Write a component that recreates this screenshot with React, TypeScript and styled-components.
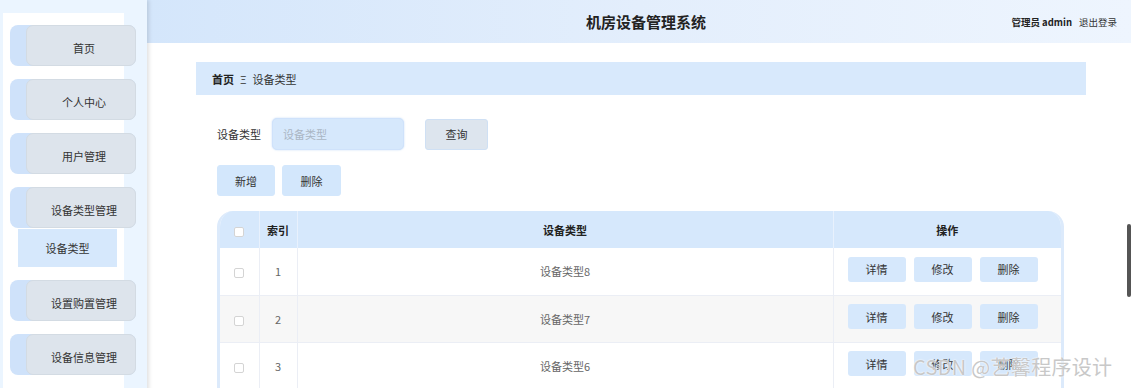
import React from 'react';
import styled, { createGlobalStyle } from 'styled-components';

const GlobalStyle = createGlobalStyle`
  html, body {
    margin: 0;
    padding: 0;
    overflow: hidden;
    background: #fff;
    font-family: "Noto Sans CJK SC", "Noto Sans", "Liberation Sans", sans-serif;
    color: #333;
  }
  * { box-sizing: border-box; }
`;

const Layout = styled.div`
  display: flex;
  min-height: 100vh;
  position: relative;
`;

const Sidebar = styled.aside`
  width: 147px;
  flex-shrink: 0;
  background: #ebf5ff;
  padding: 13px 0 0 3px;
  box-shadow: 2px 0 4px rgba(0, 0, 0, 0.12);
  position: relative;
  z-index: 2;
  display: flex;
`;

const Panel = styled.div`
  width: 121px;
  background: #fff;
  padding: 12px 0 0 7px;
  display: flex;
  flex-direction: column;
`;

const MenuItem = styled.div`
  width: 126px;
  height: 41px;
  padding-left: 16px;
  background: #cfe2fa;
  border-radius: 8px;
  margin-bottom: 13px;
  flex-shrink: 0;
`;

const MenuButton = styled.div`
  height: 100%;
  background: #dde4ec;
  border: 1px solid #d3dbe3;
  border-radius: 7px;
  display: flex;
  align-items: center;
  justify-content: center;
  padding: 5px 0 0 6px;
  font-size: 11px;
  color: #333;
`;

const SubItem = styled.div`
  width: 99px;
  height: 38px;
  margin: -12px 0 13px 8px;
  background: #d6e8fc;
  display: flex;
  align-items: center;
  justify-content: center;
  font-size: 11px;
  color: #333;
  flex-shrink: 0;
`;

const Main = styled.main`
  flex: 1;
  min-width: 0;
  display: flex;
  flex-direction: column;
`;

const Header = styled.header`
  height: 43px;
  background: linear-gradient(90deg, #d4e6fb 0%, #e3eefc 50%, #eef5fe 100%);
  display: grid;
  grid-template-columns: 1fr auto 1fr;
  align-items: center;
  padding: 0 14px 0 28px;
`;

const Title = styled.h1`
  grid-column: 2;
  margin: 0;
  font-size: 15px;
  font-weight: 700;
  color: #222;
`;

const UserBox = styled.div`
  justify-self: end;
  display: flex;
  gap: 7px;
  font-size: 9.5px;
  color: #333;
`;

const UserName = styled.span`
  font-weight: 700;
  color: #222;
`;

const Crumbs = styled.nav`
  margin: 19px 45px 0 49px;
  height: 33px;
  background: #d8e9fc;
  display: flex;
  align-items: center;
  gap: 6px;
  padding-left: 16px;
  font-size: 11px;
  color: #333;
`;

const CrumbHome = styled.span`
  font-weight: 700;
  color: #222;
`;

const Content = styled.section`
  padding: 23px 67px 0 70px;
  display: flex;
  flex-direction: column;
`;

const SearchRow = styled.div`
  display: flex;
  align-items: center;
  height: 32px;
`;

const Label = styled.span`
  font-size: 11px;
  color: #333;
  width: 55px;
`;

const Input = styled.input`
  width: 132px;
  height: 32px;
  background: #d6e8fc;
  border: 1px solid #cfe2fb;
  border-radius: 5px;
  box-shadow: 0 0 2px rgba(180, 210, 245, 0.8);
  padding: 0 10px;
  font: inherit;
  font-size: 11px;
  outline: none;
  &::placeholder { color: #aab6c4; }
`;

const Button = styled.button<{ $tone?: 'gray' | 'blue'; $w: number }>`
  width: ${p => p.$w}px;
  height: 31px;
  background: ${p => (p.$tone === 'gray' ? '#dde5ee' : '#d3e7fc')};
  border: 1px solid ${p => (p.$tone === 'gray' ? '#cfe0f4' : '#d3e7fc')};
  border-radius: 3px;
  font: inherit;
  font-size: 11px;
  color: #333;
  cursor: pointer;
  padding: 0;
`;

const QueryButton = styled(Button)`
  margin-left: 21px;
`;

const ActionRow = styled.div`
  display: flex;
  gap: 7px;
  margin-top: 15px;
`;

const TableWrap = styled.div`
  margin-top: 15px;
  border: 3px solid #dceafb;
  border-top: none;
  border-bottom: none;
  border-radius: 16px 16px 0 0;
  overflow: hidden;
`;

const Table = styled.table`
  width: 100%;
  border-collapse: collapse;
  table-layout: fixed;
`;

const Th = styled.th<{ $w?: number }>`
  ${p => (p.$w ? `width: ${p.$w}px;` : '')}
  height: 37px;
  background: #d6e8fc;
  font-size: 11px;
  font-weight: 700;
  color: #222;
  text-align: center;
  border-left: 1px solid #e8f1fd;
  &:first-child { border-left: none; }
`;

const Tr = styled.tr<{ $striped?: boolean }>`
  background: ${p => (p.$striped ? '#f7f7f7' : '#fff')};
`;

const Td = styled.td<{ $left?: boolean }>`
  height: 47px;
  font-size: 11px;
  color: #666;
  text-align: ${p => (p.$left ? 'left' : 'center')};
  border-left: 1px solid #ebeef5;
  border-bottom: 1px solid #ebeef5;
  padding: 0;
  &:first-child { border-left: none; }
`;

const Check = styled.span`
  display: inline-block;
  width: 10px;
  height: 10px;
  border: 1px solid #d4d4d4;
  border-radius: 2px;
  background: #fff;
  vertical-align: middle;
`;

const Ops = styled.div`
  display: flex;
  gap: 8px;
  padding: 0 0 4px 14px;
`;

const OpButton = styled.button`
  width: 58px;
  height: 25px;
  background: #d6e8fc;
  border: none;
  border-radius: 3px;
  font: inherit;
  font-size: 11px;
  color: #333;
  padding: 0;
`;

const ScrollThumb = styled.div`
  position: absolute;
  right: 0;
  top: 224px;
  width: 4px;
  height: 73px;
  background: #555;
  border-radius: 2px;
`;

const Watermark = styled.div`
  position: absolute;
  left: 913px;
  top: 352px;
  font-size: 20px;
  color: #c8c8c8;
  text-shadow: 0 0 2px #fff, 0 0 1px #fff;
  white-space: nowrap;
  letter-spacing: 0.3px;
  pointer-events: none;
  z-index: 5;
`;

const menus = ['首页', '个人中心', '用户管理', '设备类型管理', '设置购置管理', '设备信息管理', '系统管理'];
const rows = [8, 7, 6, 5, 4, 3, 2];

export default function App() {
  return (
    <>
      <GlobalStyle />
      <Layout>
        <Sidebar>
          <Panel>
            {menus.map(m => (
              <React.Fragment key={m}>
                <MenuItem>
                  <MenuButton>{m}</MenuButton>
                </MenuItem>
                {m === '设备类型管理' && <SubItem>设备类型</SubItem>}
              </React.Fragment>
            ))}
          </Panel>
        </Sidebar>
        <Main>
          <Header>
            <Title>机房设备管理系统</Title>
            <UserBox>
              <UserName>管理员 admin</UserName>
              <span>退出登录</span>
            </UserBox>
          </Header>
          <Crumbs>
            <CrumbHome>首页</CrumbHome>
            <span>Ξ</span>
            <span>设备类型</span>
          </Crumbs>
          <Content>
            <SearchRow>
              <Label>设备类型</Label>
              <Input placeholder="设备类型" />
              <QueryButton $tone="gray" $w={63}>查询</QueryButton>
            </SearchRow>
            <ActionRow>
              <Button $w={58}>新增</Button>
              <Button $w={59}>删除</Button>
            </ActionRow>
            <TableWrap>
              <Table>
                <thead>
                  <tr>
                    <Th $w={39}><Check /></Th>
                    <Th $w={38}>索引</Th>
                    <Th>设备类型</Th>
                    <Th $w={228}>操作</Th>
                  </tr>
                </thead>
                <tbody>
                  {rows.map((n, i) => (
                    <Tr key={n} $striped={i % 2 === 1}>
                      <Td><Check /></Td>
                      <Td>{i + 1}</Td>
                      <Td>设备类型{n}</Td>
                      <Td $left>
                        <Ops>
                          <OpButton>详情</OpButton>
                          <OpButton>修改</OpButton>
                          <OpButton>删除</OpButton>
                        </Ops>
                      </Td>
                    </Tr>
                  ))}
                </tbody>
              </Table>
            </TableWrap>
          </Content>
        </Main>
        <ScrollThumb />
        <Watermark>CSDN @艺馨程序设计</Watermark>
      </Layout>
    </>
  );
}
